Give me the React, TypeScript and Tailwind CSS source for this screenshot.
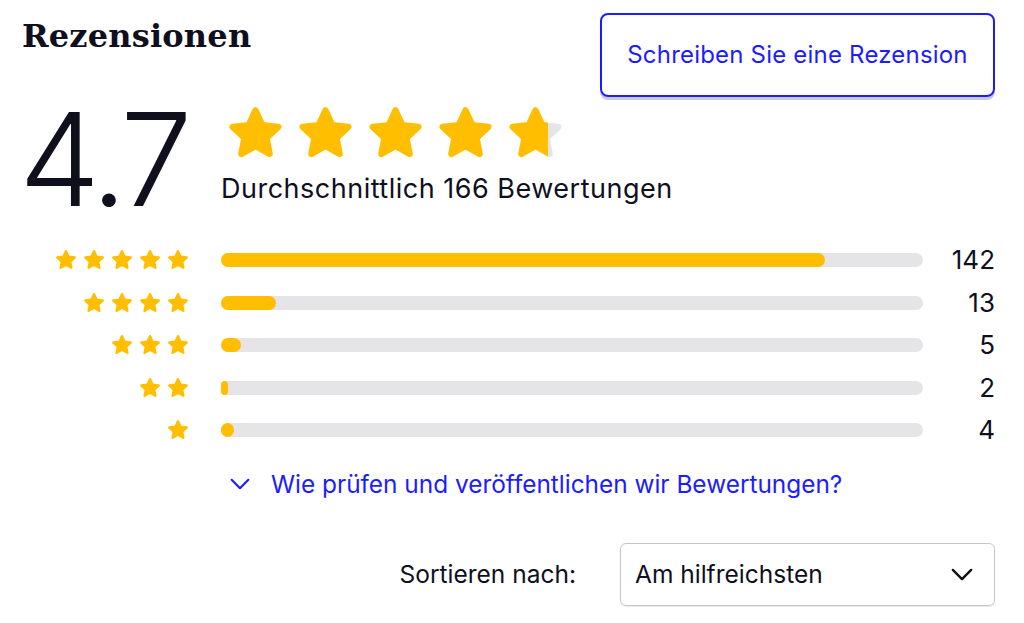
import React from 'react';

const STAR = 'M12 3.2l2.6 5.6 6.1.7-4.5 4.2 1.2 6.1L12 16.8l-5.4 3 1.2-6.1-4.5-4.2 6.1-.7z';

const Star = ({ size, fill = 1, id }: { size: number; fill?: number; id?: string }) => {
  const paint = fill < 1 && id ? `url(#${id})` : '#ffbf00';
  return (
    <svg width={size} height={size} viewBox="0 0 24 24">
      {fill < 1 && id && (
        <defs>
          <linearGradient id={id} x1="0" x2="1" y1="0" y2="0">
            <stop offset={fill} stopColor="#ffbf00" />
            <stop offset={fill} stopColor="#e5e5e8" />
          </linearGradient>
        </defs>
      )}
      <path d={STAR} fill={paint} stroke={paint} strokeWidth="2.4" strokeLinejoin="round" />
    </svg>
  );
};

const rows = [
  { stars: 5, count: 142, width: 'w-[604px]' },
  { stars: 4, count: 13, width: 'w-[55px]' },
  { stars: 3, count: 5, width: 'w-[20px]' },
  { stars: 2, count: 2, width: 'w-[7px]' },
  { stars: 1, count: 4, width: 'w-[13px]' },
];

const Chevron = ({ className }: { className: string }) => (
  <svg viewBox="0 0 24 14" className={className} fill="none" stroke="currentColor" strokeWidth="2.6" strokeLinecap="round" strokeLinejoin="round">
    <path d="M2 2l10 10L22 2" />
  </svg>
);

export default function App() {
  return (
    <div className="w-[1024px] h-[623px] bg-white text-[#0f0f1e] pl-[22px] pr-[29px] overflow-hidden" style={{ fontFamily: 'Inter, "Noto Sans", sans-serif' }}>
      {/* header */}
      <div className="flex justify-between items-start pt-[13px]">
        <h2 className="text-[32px] font-bold leading-none mt-[7px] tracking-[0.2px]" style={{ fontFamily: '"DejaVu Serif", serif' }}>
          Rezensionen
        </h2>
        <button className="w-[395px] h-[84px] border-2 border-[#1c1cff] rounded-[8px] text-[#1c1cff] text-[24px] tracking-[0.2px] shadow-[0_3px_0_rgba(180,180,190,0.7)]">
          Schreiben Sie eine Rezension
        </button>
      </div>

      {/* summary */}
      <div className="flex items-start -mt-[4px]">
        <div className="w-[202px] text-[129px] font-light leading-none tracking-[-5px] mt-[2px] -ml-[3px]">4.7</div>
        <div className="flex flex-col">
          <div className="flex gap-[7px] ml-[3px] mt-[9px]">
            <Star size={63} />
            <Star size={63} />
            <Star size={63} />
            <Star size={63} />
            <Star size={63} fill={0.78} id="partial" />
          </div>
          <div className="text-[27px] leading-none mt-[10px] tracking-[0.5px]">Durchschnittlich 166 Bewertungen</div>
        </div>
      </div>

      {/* distribution */}
      <div className="flex flex-col mt-[15px]">
        {rows.map((r) => (
          <div key={r.stars} className="flex items-center h-[42.5px]">
            <div className="w-[168px] flex justify-end gap-[4px]">
              {Array.from({ length: r.stars }).map((_, i) => (
                <Star key={i} size={24} />
              ))}
            </div>
            <div className="ml-[31px] w-[702px] h-[14px] rounded-full bg-[#e5e5e8]">
              <div className={`h-full rounded-full bg-[#ffbf00] ${r.width}`} />
            </div>
            <div className="flex-1 text-right text-[26px] leading-none">{r.count}</div>
          </div>
        ))}
      </div>

      {/* link */}
      <div className="flex items-center ml-[208px] mt-[20px] text-[#1c1cff]">
        <Chevron className="w-[20px] h-[12px]" />
        <span className="ml-[21px] text-[24.4px] leading-none">Wie prüfen und veröffentlichen wir Bewertungen?</span>
      </div>

      {/* sort */}
      <div className="flex items-center justify-end mt-[47px]">
        <span className="text-[24.5px] mr-[44px]">Sortieren nach:</span>
        <div className="w-[375px] h-[63px] border border-[#c4c4cc] rounded-[6px] flex items-center justify-between pl-[14px] pr-[21px] shadow-[0_1px_1px_rgba(0,0,0,0.08)]">
          <span className="text-[24.5px]">Am hilfreichsten</span>
          <Chevron className="w-[22px] h-[13px] text-[#0f0f1e]" />
        </div>
      </div>
    </div>
  );
}
